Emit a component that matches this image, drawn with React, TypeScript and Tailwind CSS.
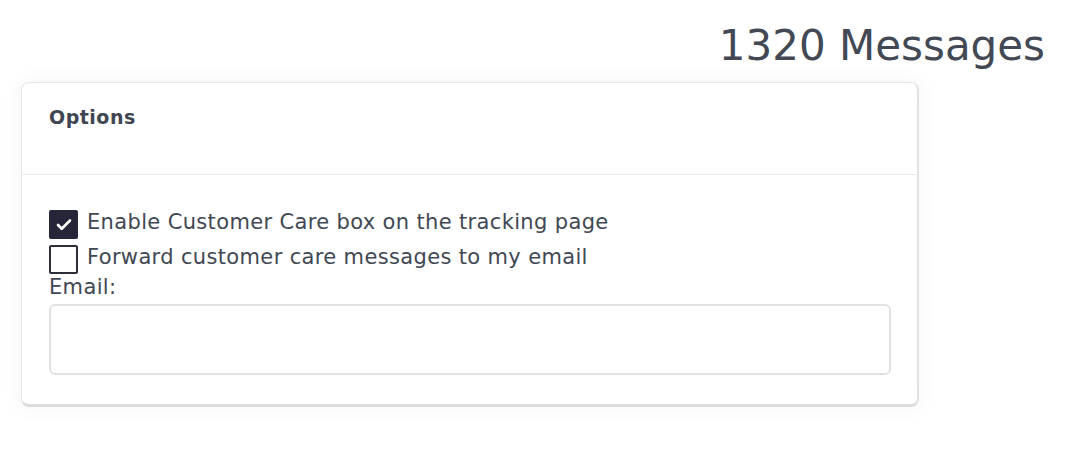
import { Check } from 'lucide-react';

const font = { fontFamily: '"DejaVu Sans", Verdana, sans-serif' };

const CheckRow = ({ checked, label }: { checked: boolean; label: string }) => (
  <label className="flex items-center gap-[9px]">
    <span
      className={
        checked
          ? 'flex h-[29px] w-[29px] items-center justify-center rounded-[2px] bg-[#25263a]'
          : 'h-[29px] w-[29px] rounded-[2px] border-2 border-[#2e2f3a] bg-white'
      }
    >
      {checked && <Check className="size-[18px] text-white" strokeWidth={3.5} />}
    </span>
    <span className="pb-[4px] text-[21px] leading-[25px] tracking-[0.35px] text-[#414853]">{label}</span>
  </label>
);

export default function App() {
  return (
    <div className="min-h-[450px] bg-white" style={font}>
      <div className="flex justify-end pr-[25px] pt-[20px]">
        <h1 className="text-[42px] leading-[52px] text-[#424954]">1320 Messages</h1>
      </div>

      <div className="ml-[21px] mt-[10px] w-[898px] rounded-lg border border-[#e8e8e8] border-b-[3px] border-b-[#dcdcdc] border-r-[2px] border-r-[#e2e2e2] bg-white shadow-[0_0_22px_rgba(0,0,0,0.05)]">
        {/* Header */}
        <div className="h-[92px] border-b border-[#ebebeb] pl-[27px] pr-[26px] pt-[20px]">
          <h3 className="text-[19px] font-bold tracking-[0.5px] text-[#3f4652]">Options</h3>
        </div>

        {/* Contenido */}
        <div className="flex flex-col pb-[29px] pl-[27px] pr-[26px] pt-[35px]">
          <div className="flex flex-col gap-[6px]">
            <CheckRow checked label="Enable Customer Care box on the tracking page" />
            <CheckRow checked={false} label="Forward customer care messages to my email" />
          </div>
          <span className="text-[21px] leading-[26px] tracking-[0.35px] text-[#414853]">Email:</span>
          <input
            type="text"
            className="mt-[4px] h-[71px] w-full rounded-md border-2 border-[#e2e2e6] bg-white px-3 outline-none"
          />
        </div>
      </div>
    </div>
  );
}
